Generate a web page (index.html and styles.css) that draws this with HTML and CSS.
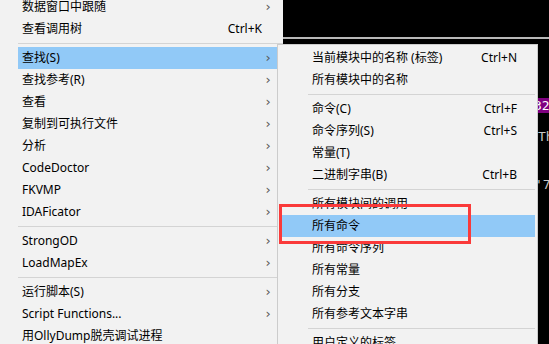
FILE: index.html
```html
<!DOCTYPE html>
<html lang="zh-CN">
<head>
<meta charset="utf-8">
<link rel="stylesheet" href="styles.css">
</head>
<body>
<div class="screen">
  <div class="backdrop">
    <div class="rule"></div>
    <span class="bg-text tag">32</span>
    <span class="bg-text th">Th</span>
    <span class="bg-text seven">'7</span>
  </div>

  <div class="menu main">
    <div class="item"><span class="label">数据窗口中跟随</span><span class="arrow">›</span></div>
    <div class="item"><span class="label">查看调用树</span><span class="key">Ctrl+K</span></div>
    <div class="sep"></div>
    <div class="item active"><span class="label">查找(S)</span><span class="arrow">›</span></div>
    <div class="item"><span class="label">查找参考(R)</span><span class="arrow">›</span></div>
    <div class="item"><span class="label">查看</span><span class="arrow">›</span></div>
    <div class="item"><span class="label">复制到可执行文件</span><span class="arrow">›</span></div>
    <div class="item"><span class="label">分析</span><span class="arrow">›</span></div>
    <div class="item"><span class="label">CodeDoctor</span><span class="arrow">›</span></div>
    <div class="item"><span class="label">FKVMP</span><span class="arrow">›</span></div>
    <div class="item"><span class="label">IDAFicator</span><span class="arrow">›</span></div>
    <div class="sep"></div>
    <div class="item"><span class="label">StrongOD</span><span class="arrow">›</span></div>
    <div class="item"><span class="label">LoadMapEx</span><span class="arrow">›</span></div>
    <div class="sep"></div>
    <div class="item"><span class="label">运行脚本(S)</span><span class="arrow">›</span></div>
    <div class="item"><span class="label">Script Functions...</span><span class="arrow">›</span></div>
    <div class="item"><span class="label">用OllyDump脱壳调试进程</span></div>
  </div>

  <div class="menu sub">
    <div class="item"><span class="label">当前模块中的名称 (标签)</span><span class="key">Ctrl+N</span></div>
    <div class="item"><span class="label">所有模块中的名称</span></div>
    <div class="sep"></div>
    <div class="item"><span class="label">命令(C)</span><span class="key">Ctrl+F</span></div>
    <div class="item"><span class="label">命令序列(S)</span><span class="key">Ctrl+S</span></div>
    <div class="item"><span class="label">常量(T)</span></div>
    <div class="item"><span class="label">二进制字串(B)</span><span class="key">Ctrl+B</span></div>
    <div class="sep"></div>
    <div class="item"><span class="label">所有模块间的调用</span></div>
    <div class="item active"><span class="label">所有命令</span></div>
    <div class="item"><span class="label">所有命令序列</span></div>
    <div class="item"><span class="label">所有常量</span></div>
    <div class="item"><span class="label">所有分支</span></div>
    <div class="item"><span class="label">所有参考文本字串</span></div>
    <div class="sep"></div>
    <div class="item"><span class="label">用户定义的标签</span></div>
  </div>

  <div class="mark"></div>
</div>
</body>
</html>
```

FILE: styles.css
```css
html, body {
  margin: 0;
  padding: 0;
  background: #000;
}

.screen {
  position: relative;
  width: 549px;
  height: 344px;
  overflow: hidden;
  background: #000;
  font-family: "Noto Sans", "Noto Sans CJK SC", sans-serif;
  font-size: 12px;
  color: #000;
}

.backdrop {
  position: absolute;
  inset: 0;
}

.rule {
  position: absolute;
  left: 283px;
  right: 0;
  top: 37px;
  height: 2px;
  background: #b8b8b8;
}

.bg-text {
  position: absolute;
  font-family: "DejaVu Sans Mono", monospace;
  font-size: 13px;
  line-height: 15px;
  color: #c8c8c8;
}

.tag {
  left: 532px;
  top: 98px;
  padding: 0 2px;
  background: #800080;
  color: #fff;
}

.th {
  left: 538px;
  top: 129px;
}

.seven {
  left: 535px;
  top: 177px;
}

.menu {
  background: #f2f2f2;
}

.menu.main {
  position: relative;
  width: 283px;
  margin-top: -4px;
}

.menu .item {
  display: flex;
  align-items: center;
  height: 22px;
  line-height: 22px;
  white-space: nowrap;
}

.menu.main .item {
  margin-left: 18px;
  padding-left: 4px;
}

.menu .item.active {
  background: #91c9f7;
}

.menu .label {
  flex: 1;
}

.menu.main .key {
  margin-right: 21px;
}

.menu .arrow {
  width: 30px;
  text-align: center;
  font-family: "DejaVu Sans", sans-serif;
  font-size: 13px;
  color: #555;
}

.menu .sep {
  height: 7px;
  position: relative;
}

.menu .sep::after {
  content: "";
  position: absolute;
  left: 0;
  right: 0;
  top: 3px;
  height: 1px;
  background: #d4d4d4;
}

.menu.main .sep {
  margin-left: 18px;
}

.menu.sub {
  position: absolute;
  left: 277px;
  top: 44px;
  width: 255px;
  padding: 2px;
  border: 1px solid #cccccc;
}

.menu.sub .item {
  padding-left: 32px;
  padding-right: 18px;
}

.menu.sub .sep {
  margin-left: 28px;
}

.mark {
  position: absolute;
  left: 279px;
  top: 204px;
  width: 186px;
  height: 34px;
  border: 3px solid #fa3a3a;
}
```
